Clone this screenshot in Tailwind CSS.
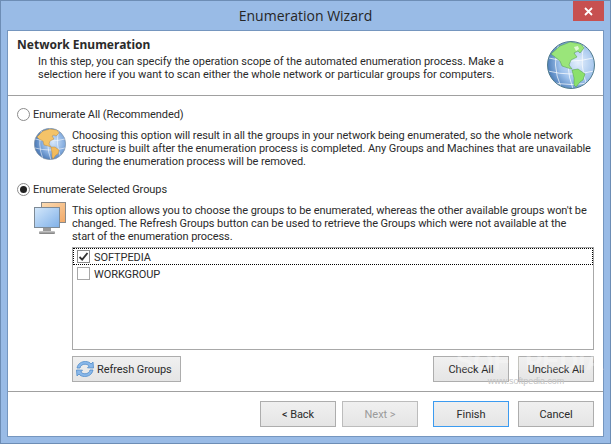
<!DOCTYPE html>
<html>
<head>
<meta charset="utf-8">
<script src="https://cdn.jsdelivr.net/npm/@tailwindcss/browser@4"></script>
</head>
<body class="m-0 overflow-hidden">
<div class="relative w-[611px] h-[444px] flex flex-col bg-[#99bbe6] border border-[#6d8db5] font-['Roboto','Open_Sans',sans-serif] text-[11px] tracking-[-0.07px] leading-[13px] text-[#2b2b2b]">
  <div class="h-[29px] shrink-0 flex items-center justify-center text-[14px] tracking-normal text-[#262626] font-['Open_Sans',sans-serif] pb-[1px]">Enumeration Wizard</div>
  <button class="absolute top-0 right-[6px] w-[31px] h-[20px] bg-[#c75050] flex items-center justify-center">
    <svg width="9" height="9" viewBox="0 0 9 9"><path d="M1 1 L8 8 M8 1 L1 8" stroke="#fff" stroke-width="1.8"/></svg>
  </button>
  <div class="flex-1 mx-[6px] mb-[6px] bg-white border border-[#7596bf] flex flex-col min-h-0">
    <!-- header -->
    <div class="h-[65px] shrink-0 border-b border-[#a0a0a0] flex pl-[9px] pr-[8px] pt-[7px]">
      <div class="flex-1 min-w-0">
        <div class="font-bold text-[12px] tracking-normal font-['Noto_Sans',sans-serif] leading-[14px] text-[#2b2b2b]">Network Enumeration</div>
        <div class="pl-[21px] pt-[3px] tracking-[-0.03px]">
          <div class="whitespace-nowrap">In this step, you can specify the operation scope of the automated enumeration process. Make a</div>
          <div class="whitespace-nowrap">selection here if you want to scan either the whole network or particular groups for computers.</div>
        </div>
      </div>
      <svg width="48" height="48" viewBox="0 0 48 48" class="mt-[3px] shrink-0">
        <defs>
          <radialGradient id="g1" cx="0.65" cy="0.45" r="0.65"><stop offset="0" stop-color="#e4effc"/><stop offset="0.6" stop-color="#9fc2ec"/><stop offset="1" stop-color="#4f80bb"/></radialGradient>
          <clipPath id="c1"><circle cx="24" cy="24" r="23"/></clipPath>
        </defs>
        <circle cx="24" cy="24" r="23.5" fill="url(#g1)" stroke="#4f7a8c"/>
        <g clip-path="url(#c1)">
          <path d="M1 30 Q24 36 47 30 M2 17 Q24 23 46 17 M0 40 Q24 47 48 40 M12 2 Q4 24 14 46 M24 0 Q17 24 26 48 M37 3 Q32 24 40 45" stroke="#fff" stroke-opacity=".7" fill="none"/>
          <path d="M4 13 L13 5 L23 1 L34 3 L37 7 L33 12 L31 10 L27 12 L30 16 L24 19 L22 24 L25 28 L21 27 L15 25 L13 20 L8 16 Z" fill="#9ae57a" stroke="#4f9a48" stroke-width=".5"/>
          <path d="M25 29 L31 28 L38 33 L36 39 L33 41 L29 46 L27 44 L27 37 Z" fill="#8be06c" stroke="#4f9a48" stroke-width=".5"/>
          <path d="M27 6 L31 5 L32 8 L29 10 Z" fill="#fff" opacity=".7"/>
        </g>
      </svg>
    </div>
    <!-- body -->
    <div class="flex-1 flex flex-col pl-[9px] pr-[8px] pt-[10px] min-h-0">
      <label class="flex items-center h-[16px]">
        <span class="w-[13px] h-[13px] rounded-full border border-[#8c8c8c] bg-white shrink-0"></span>
        <span class="ml-[3px]">Enumerate All (Recommended)</span>
      </label>
      <div class="flex mt-[7px] h-[52px]">
        <svg width="32" height="32" viewBox="0 0 32 32" class="ml-[17px] -mt-[1px] shrink-0">
          <defs>
            <radialGradient id="g2" cx="0.6" cy="0.45" r="0.6"><stop offset="0" stop-color="#d5e6fa"/><stop offset="0.6" stop-color="#86aee0"/><stop offset="1" stop-color="#4a78b4"/></radialGradient>
            <clipPath id="c2"><circle cx="16" cy="16" r="15.5"/></clipPath>
          </defs>
          <circle cx="16" cy="16" r="15.7" fill="url(#g2)" stroke="#7f8f9c" stroke-width=".6"/>
          <g clip-path="url(#c2)">
            <path d="M1 20 Q16 24 31 20 M1 11 Q16 15 31 11 M8 1 Q3 16 9 31 M16 0 Q11 16 17 32 M25 2 Q21 16 27 30" stroke="#fff" stroke-opacity=".7" stroke-width=".8" fill="none"/>
            <path d="M3 9 L9 3 L16 1 L23 2 L25 5 L22 8 L20 7 L18 8 L20 11 L16 13 L15 16 L17 19 L14 18 L10 17 L9 13 L5 11 Z" fill="#f4c368" stroke="#b07f30" stroke-width=".4"/>
            <path d="M17 19 L21 19 L25 22 L24 26 L22 27 L19 31 L18 29 L18 25 Z" fill="#f2bb5c" stroke="#b07f30" stroke-width=".4"/>
          </g>
        </svg>
        <div class="pl-[6px] whitespace-nowrap">
          <div>Choosing this option will result in all the groups in your network being enumerated, so the whole network</div>
          <div>structure is built after the enumeration process is completed. Any Groups and Machines that are unavailable</div>
          <div>during the enumeration process will be removed.</div>
        </div>
      </div>
      <label class="flex items-center h-[16px]">
        <span class="w-[13px] h-[13px] rounded-full border border-[#8c8c8c] bg-white shrink-0 flex items-center justify-center"><span class="w-[7px] h-[7px] rounded-full bg-[#222]"></span></span>
        <span class="ml-[3px]">Enumerate Selected Groups</span>
      </label>
      <div class="flex mt-[7px] h-[43px] shrink-0">
        <svg width="32" height="32" viewBox="0 0 32 32" class="ml-[17px] -mt-[2px] shrink-0">
          <defs>
            <linearGradient id="o" x1="0" y1="0" x2="1" y2="1"><stop offset="0" stop-color="#fbdcb4"/><stop offset="1" stop-color="#f2a866"/></linearGradient>
            <linearGradient id="b" x1="0" y1="0" x2="1" y2="1"><stop offset="0" stop-color="#d4e8fb"/><stop offset="1" stop-color="#7fb0e8"/></linearGradient>
            <linearGradient id="s" x1="0" y1="0" x2="0" y2="1"><stop offset="0" stop-color="#cfcfcf"/><stop offset="1" stop-color="#7a7a7a"/></linearGradient>
          </defs>
          <rect x="7.5" y="0.5" width="24" height="20" fill="url(#o)" stroke="#8a8a8a"/>
          <rect x="0.5" y="5.5" width="25" height="20" fill="url(#b)" stroke="#7d8a96"/>
          <rect x="9" y="26" width="8" height="3" fill="#9a9a9a"/>
          <rect x="5" y="29" width="16" height="3" rx="1" fill="url(#s)"/>
        </svg>
        <div class="pl-[6px] whitespace-nowrap">
          <div>This option allows you to choose the groups to be enumerated, whereas the other available groups won't be</div>
          <div>changed. The Refresh Groups button can be used to retrieve the Groups which were not available at the</div>
          <div>start of the enumeration process.</div>
        </div>
      </div>
      <!-- list -->
      <div class="ml-[55px] w-[522px] h-[103px] border border-[#a8a8a8] shrink-0">
        <div class="h-[17px] border border-dotted border-black flex items-center pl-[3px]">
          <span class="w-[13px] h-[13px] border border-[#8c8c8c] flex items-center justify-center shrink-0">
            <svg width="11" height="11" viewBox="0 0 11 11"><path d="M1.5 6 L4.2 8.6 L9.5 2" stroke="#333" stroke-width="1.8" fill="none"/></svg>
          </span>
          <span class="ml-[4px] pt-[2px]">SOFTPEDIA</span>
        </div>
        <div class="h-[17px] flex items-center pl-[4px]">
          <span class="w-[13px] h-[13px] border border-[#a8a8a8] shrink-0"></span>
          <span class="ml-[4px] pt-[2px]">WORKGROUP</span>
        </div>
      </div>
      <!-- list buttons -->
      <div class="ml-[55px] w-[522px] flex mt-[6px] h-[26px] shrink-0">
        <button class="w-[109px] h-[26px] border border-[#adadad] bg-gradient-to-b from-[#f0f0f0] to-[#e5e5e5] flex items-center pl-[2px] whitespace-nowrap">
          <svg width="20" height="18" viewBox="0 0 20 18" class="shrink-0">
            <path d="M2 8 C3 3 7 1.5 10.5 1.5 C13 1.5 15 2.5 16 4 L18 2 L18.5 8 L12.5 7.8 L14.2 6 C13 4.8 11.5 4.2 10 4.2 C7.5 4.2 5.5 5.5 5 8 Z" fill="#8ab8ea" stroke="#4f8cc9" stroke-width=".8"/>
            <path d="M18 10 C17 15 13 16.5 9.5 16.5 C7 16.5 5 15.5 4 14 L2 16 L1.5 10 L7.5 10.2 L5.8 12 C7 13.2 8.5 13.8 10 13.8 C12.5 13.8 14.5 12.5 15 10 Z" fill="#8ab8ea" stroke="#4f8cc9" stroke-width=".8"/>
          </svg>
          <span class="ml-[2px]">Refresh Groups</span>
        </button>
        <button class="ml-auto w-[76px] h-[26px] border border-[#adadad] bg-gradient-to-b from-[#f0f0f0] to-[#e5e5e5]">Check All</button>
        <button class="ml-[9px] w-[76px] h-[26px] border border-[#adadad] bg-gradient-to-b from-[#f0f0f0] to-[#e5e5e5]">Uncheck All</button>
      </div>
    </div>
    <!-- footer -->
    <div class="h-[45px] shrink-0 border-t border-[#a0a0a0] flex pt-[9px] pl-[252px]">
      <button class="w-[76px] h-[26px] border border-[#adadad] bg-gradient-to-b from-[#f0f0f0] to-[#e5e5e5]">&lt; Back</button>
      <button class="ml-[6px] w-[76px] h-[26px] border border-[#bcbcbc] bg-gradient-to-b from-[#f0f0f0] to-[#e5e5e5] text-[#9a9a9a]">Next &gt;</button>
      <button class="ml-[15px] w-[76px] h-[26px] border border-[#3c9bf0] bg-gradient-to-b from-[#f0f0f0] to-[#e5e5e5]">Finish</button>
      <button class="ml-[9px] w-[76px] h-[26px] border border-[#adadad] bg-gradient-to-b from-[#f0f0f0] to-[#e5e5e5]">Cancel</button>
    </div>
  </div>
  <!-- watermark -->
  <div class="absolute left-[455px] top-[345px] w-[140px] text-center pointer-events-none">
    <div class="text-[26px] leading-[30px] font-bold text-white/30 font-['Liberation_Sans',sans-serif]">SOFTPEDIA</div>
    <div class="text-[9px] leading-[10px] text-[#c4c4c4] font-['Liberation_Sans',sans-serif]">www.softpedia.com</div>
  </div>
</div>
</body>
</html>
